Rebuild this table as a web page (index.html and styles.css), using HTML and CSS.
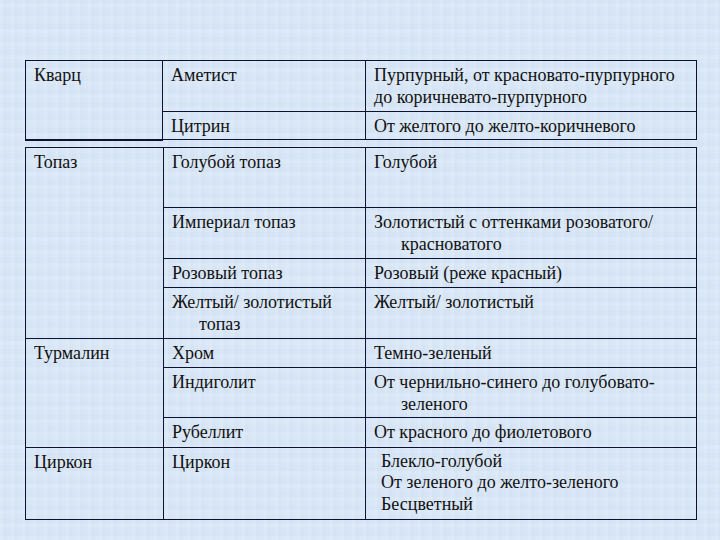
FILE: index.html
```html
<!DOCTYPE html>
<html lang="ru">
<head>
<meta charset="utf-8">
<title>Камни</title>
<link rel="stylesheet" href="styles.css">
</head>
<body>
<div class="slide">
  <table class="gems first">
    <colgroup><col class="c1a"><col class="c2a"><col class="c3"></colgroup>
    <tr class="r51">
      <td rowspan="2" class="thickbottom">Кварц</td>
      <td>Аметист</td>
      <td>Пурпурный, от красновато-пурпурного<br>до коричневато-пурпурного</td>
    </tr>
    <tr class="r28">
      <td>Цитрин</td>
      <td>От желтого до желто-коричневого</td>
    </tr>
  </table>
  <table class="gems second">
    <colgroup><col class="c1b"><col class="c2b"><col class="c3"></colgroup>
    <tr class="r60">
      <td rowspan="4">Топаз</td>
      <td>Голубой топаз</td>
      <td>Голубой</td>
    </tr>
    <tr class="r51">
      <td>Империал топаз</td>
      <td class="hang">Золотистый с оттенками розоватого/<br>красноватого</td>
    </tr>
    <tr class="r29">
      <td>Розовый топаз</td>
      <td>Розовый (реже красный)</td>
    </tr>
    <tr class="r51">
      <td class="hang">Желтый/ золотистый<br>топаз</td>
      <td>Желтый/ золотистый</td>
    </tr>
    <tr class="r29">
      <td rowspan="3">Турмалин</td>
      <td>Хром</td>
      <td>Темно-зеленый</td>
    </tr>
    <tr class="r50">
      <td>Индиголит</td>
      <td class="hang">От чернильно-синего до голубовато-<br>зеленого</td>
    </tr>
    <tr class="r30">
      <td>Рубеллит</td>
      <td>От красного до фиолетового</td>
    </tr>
    <tr class="r72">
      <td>Циркон</td>
      <td>Циркон</td>
      <td class="list">Блекло-голубой<br>От зеленого до желто-зеленого<br>Бесцветный</td>
    </tr>
  </table>
</div>
</body>
</html>
```

FILE: styles.css
```css
html, body {
  margin: 0;
  padding: 0;
}
body {
  width: 720px;
  height: 540px;
  overflow: hidden;
  background-color: #d8e6f6;
  background-image:
    repeating-linear-gradient(90deg, rgba(255,255,255,0.10) 0 3px, rgba(190,208,232,0.07) 3px 7px, rgba(255,255,255,0) 7px 11px),
    repeating-linear-gradient(0deg, rgba(255,255,255,0.08) 0 4px, rgba(185,205,230,0.07) 4px 9px, rgba(255,255,255,0) 9px 13px);
  font-family: "Liberation Serif", "DejaVu Serif", serif;
  color: #111;
}
.slide {
  padding: 60px 0 0 25px;
}
.gems {
  border-collapse: collapse;
  table-layout: fixed;
  width: 671px;
  font-family: "Liberation Serif", "DejaVu Serif", serif;
  font-size: 18px;
  line-height: 22px;
}
.second {
  margin-top: 6px;
}
.gems td {
  border: 1px solid #0c1230;
  vertical-align: top;
  padding: 3px 8px 0 8px;
  box-sizing: border-box;
}
.c1a { width: 137px; }
.c2a { width: 203px; }
.c1b { width: 138px; }
.c2b { width: 202px; }
.c3 { width: 331px; }
.thickbottom { border-bottom-width: 2px !important; }
.r28 { height: 28px; }
.r29 { height: 29px; }
.r30 { height: 30px; }
.r50 { height: 50px; }
.r51 { height: 51px; }
.r60 { height: 60px; }
.r72 { height: 72px; }
.gems td.hang {
  padding-left: 35px;
  text-indent: -27px;
}
.gems td.list {
  padding-left: 15px;
  line-height: 21.5px;
}
```
